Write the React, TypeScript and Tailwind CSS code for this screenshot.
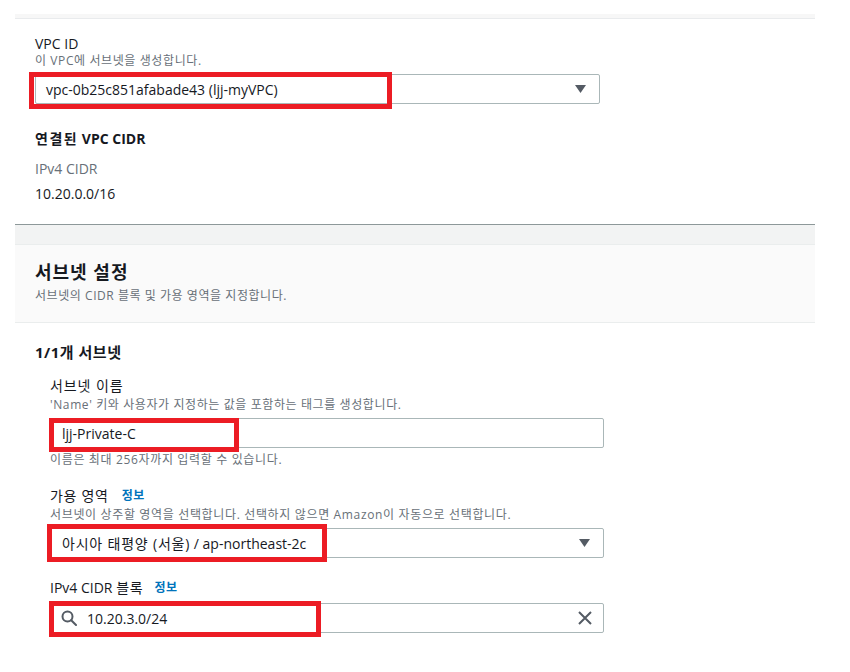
import React from "react";

const font = { fontFamily: '"Open Sans", "Noto Sans CJK KR", sans-serif' };

function RedBox({ cls }: { cls: string }) {
  return <div className={`pointer-events-none absolute border-[5px] border-[#ec1c24] ${cls}`} />;
}

function Caret() {
  return (
    <svg width="11" height="8" viewBox="0 0 11 8" className="shrink-0">
      <path d="M0 0 H11 L5.5 8 Z" fill="#545b64" />
    </svg>
  );
}

export default function App() {
  return (
    <div className="min-h-[672px] w-[850px] bg-white text-[#16191f]" style={font}>
      <div className="ml-[15px] w-[800px]">
        <div className="mt-[14px] h-[5px] border-b border-[#e9ebed] bg-[#f7f7f7]" />

        {/* VPC card body */}
        <div className="px-5 pt-[15px] pb-[20px]">
          <div className="text-[14px] leading-[20px]">VPC ID</div>
          <div className="text-[12px] leading-[14px] tracking-[0.6px] text-[#687078]">이 VPC에 서브넷을 생성합니다.</div>
          <div className="relative mt-[6px] w-[565px]">
            <div className="flex h-[30px] items-center justify-between rounded-[2px] border border-[#aab7b8] pl-[10px] pr-[13px] text-[14px]">
              <span>vpc-0b25c851afabade43 (ljj-myVPC)</span>
              <Caret />
            </div>
            <RedBox cls="-left-[6px] -top-[2px] h-[37px] w-[363px]" />
          </div>
          <div className="mt-[25px] text-[14px] font-bold leading-[20px]">
            <span className="tracking-[1.5px]">연결된</span> VPC CIDR
          </div>
          <div className="mt-[10px] text-[14px] leading-[20px] text-[#687078]">IPv4 CIDR</div>
          <div className="mt-[5px] text-[14px] leading-[20px]">10.20.0.0/16</div>
        </div>

        {/* gap between cards */}
        <div className="h-[20px] border-t border-[#8d9899] bg-[#f2f3f3]" />

        {/* Subnet settings header */}
        <div className="border-y border-[#eaeded] bg-[#fafafa] px-5 pt-[15px] pb-[18px]">
          <div className="text-[18px] font-bold leading-[24px] tracking-[1px]">서브넷 설정</div>
          <div className="mt-[4px] text-[12px] leading-[16px] tracking-[0.55px] text-[#687078]">
            서브넷의 CIDR 블록 및 가용 영역을 지정합니다.
          </div>
        </div>

        {/* Subnet body */}
        <div className="px-5 pt-[18px]">
          <div className="text-[15px] font-bold leading-[22px] tracking-[0.5px]">1/1개 서브넷</div>
          <div className="pl-[15px]">
            <div className="mt-[13px] text-[14px] leading-[20px] tracking-[0.9px]">서브넷 이름</div>
            <div className="mt-[2px] text-[12px] leading-[14px] tracking-[0.6px] text-[#687078]">
              'Name' 키와 사용자가 지정하는 값을 포함하는 태그를 생성합니다.
            </div>
            <div className="relative mt-[6px] w-[554px]">
              <div className="flex h-[30px] items-center rounded-[2px] border border-[#aab7b8] pl-[11px] text-[14px]">
                ljj-Private-C
              </div>
              <RedBox cls="-left-[1px] top-0 h-[34px] w-[190px]" />
            </div>
            <div className="mt-[5px] text-[12px] leading-[14px] tracking-[0.65px] text-[#687078]">
              이름은 최대 256자까지 입력할 수 있습니다.
            </div>

            <div className="mt-[19px] flex items-center gap-[13px] text-[14px] leading-[20px]">
              <span className="tracking-[0.7px]">가용 영역</span>
              <span className="text-[12px] font-bold tracking-[0.5px] text-[#0073bb]">정보</span>
            </div>
            <div className="mt-[2px] text-[12px] leading-[14px] tracking-[0.65px] text-[#687078]">
              서브넷이 상주할 영역을 선택합니다. 선택하지 않으면 Amazon이 자동으로 선택합니다.
            </div>
            <div className="relative mt-[6px] w-[554px]">
              <div className="flex h-[30px] items-center justify-between rounded-[2px] border border-[#aab7b8] pl-[11px] pr-[13px] text-[14px]">
                <span>
                  <span className="tracking-[0.8px]">아시아 태평양 (서울)</span> / ap-northeast-2c
                </span>
                <Caret />
              </div>
              <RedBox cls="-left-[3px] -top-[4px] h-[38px] w-[280px]" />
            </div>

            <div className="mt-[20px] flex items-center gap-[11px] text-[14px] leading-[20px]">
              <span>
                IPv4 CIDR <span className="tracking-[0.8px]">블록</span>
              </span>
              <span className="text-[12px] font-bold tracking-[0.5px] text-[#0073bb]">정보</span>
            </div>
            <div className="relative mt-[5px] w-[554px]">
              <div className="flex h-[30px] items-center rounded-[2px] border border-[#aab7b8] pl-[10px] pr-[11px] text-[14px]">
                <svg width="16" height="16" viewBox="0 0 16 16" className="shrink-0">
                  <circle cx="6.5" cy="6.5" r="5" fill="none" stroke="#545b64" strokeWidth="2" />
                  <path d="M10.2 10.2 L15 15" stroke="#545b64" strokeWidth="2" strokeLinecap="round" />
                </svg>
                <span className="ml-[10px] flex-1">10.20.3.0/24</span>
                <svg width="14" height="14" viewBox="0 0 14 14" className="shrink-0">
                  <path d="M1 1 L13 13 M13 1 L1 13" stroke="#545b64" strokeWidth="2" />
                </svg>
              </div>
              <RedBox cls="-left-[1px] -top-[2px] h-[36px] w-[272px]" />
            </div>
          </div>
        </div>
      </div>
    </div>
  );
}
